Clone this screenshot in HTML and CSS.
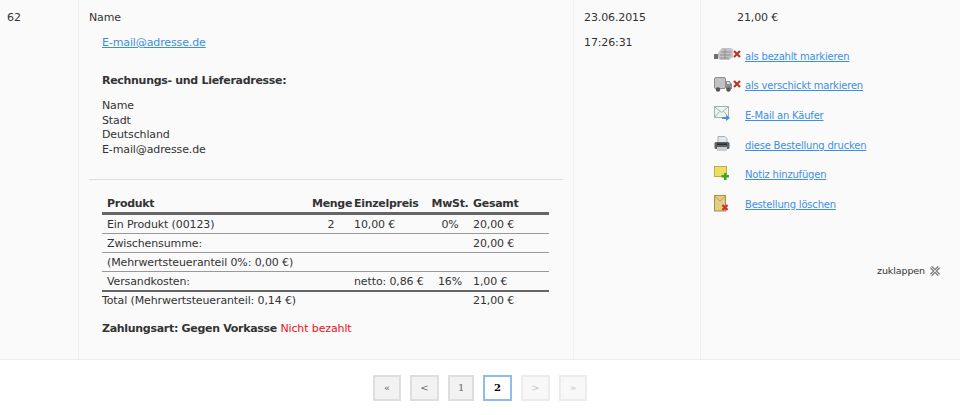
FILE: index.html

```html
<!DOCTYPE html>
<html lang="de">
<head>
  <meta charset="UTF-8" />
  <title>Bestellungen</title>
  <meta name="viewport" content="width=device-width, initial-scale=1" />
  <link rel="stylesheet" href="styles.css">
</head>
<body>

<div class="order">
  <div class="col col-id">62</div>

  <div class="col col-customer">
    <div class="cust-name">Name</div>
    <div class="cust-mail"><a href="#">E-mail@adresse.de</a></div>
    <h4 class="addr-title">Rechnungs- und Lieferadresse:</h4>
    <div class="addr">Name<br>Stadt<br>Deutschland<br>E-mail@adresse.de</div>
    <hr class="divider">

    <table class="items">
      <colgroup>
        <col class="c-prod"><col class="c-qty"><col class="c-price"><col class="c-tax"><col class="c-sum">
      </colgroup>
      <thead>
        <tr><th>Produkt</th><th class="mid">Menge</th><th>Einzelpreis</th><th class="mid">MwSt.</th><th>Gesamt</th></tr>
      </thead>
      <tbody>
        <tr><td>Ein Produkt (00123)</td><td class="mid">2</td><td>10,00 €</td><td class="mid">0%</td><td>20,00 €</td></tr>
        <tr><td>Zwischensumme:</td><td></td><td></td><td></td><td>20,00 €</td></tr>
        <tr><td colspan="4">(Mehrwertsteueranteil 0%: 0,00 €)</td><td></td></tr>
        <tr class="last"><td>Versandkosten:</td><td></td><td>netto: 0,86 €</td><td class="mid">16%</td><td>1,00 €</td></tr>
        <tr class="total"><td colspan="4">Total (Mehrwertsteueranteil: 0,14 €)</td><td>21,00 €</td></tr>
      </tbody>
    </table>

    <p class="payment"><strong>Zahlungsart: Gegen Vorkasse</strong> <span class="unpaid">Nicht bezahlt</span></p>
  </div>

  <div class="col col-date">
    <div>23.06.2015</div>
    <div class="time">17:26:31</div>
  </div>

  <div class="col col-actions">
    <div class="amount">21,00 €</div>
    <ul class="actions">
      <li>
        <span class="icons">
          <svg width="20" height="15" viewBox="0 0 20 15"><rect x="0" y="7" width="4" height="5" fill="#6f6f6f"/><path d="M4 6l4-5h8l3 1v8l-4 3H6l-2-2z" fill="#c4c4c4"/><path d="M7 5h10M6 8h11M6 11h9M11 2v10" stroke="#8f8f8f" fill="none"/></svg>
          <svg class="cross" width="8" height="8" viewBox="0 0 8 8"><path d="M1 1l6 6M7 1l-6 6" stroke="#b8362c" stroke-width="2.200"/></svg>
        </span>
        <a href="#">als bezahlt markieren</a>
      </li>
      <li>
        <span class="icons">
          <svg width="20" height="15" viewBox="0 0 20 15"><rect x="0.500" y="0.500" width="11" height="11" rx="1.500" fill="#c2c2c2" stroke="#8d8d8d"/><path d="M12 4h3.500l2.500 3v5h-6z" fill="#8f8f8f"/><path d="M13 5h2l1.500 2H13z" fill="#e2e2e2"/><circle cx="4" cy="12.500" r="2.200" fill="#555"/><circle cx="14.500" cy="12.500" r="2.200" fill="#555"/></svg>
          <svg class="cross" width="8" height="8" viewBox="0 0 8 8"><path d="M1 1l6 6M7 1l-6 6" stroke="#b8362c" stroke-width="2.200"/></svg>
        </span>
        <a href="#">als verschickt markieren</a>
      </li>
      <li>
        <span class="icons">
          <svg width="16" height="15" viewBox="0 0 16 15"><rect x="0.500" y="0.500" width="14" height="11" fill="#eef3f3" stroke="#a5b0ad"/><path d="M1 1l6.500 5.500L14 1M1 11l4.500-5.500M14 11l-4-5.500" stroke="#a5b0ad" fill="none"/><path d="M8 11h4V9l4 3-4 3v-2H8z" fill="#4a90d9"/></svg>
        </span>
        <a href="#">E-Mail an Käufer</a>
      </li>
      <li>
        <span class="icons">
          <svg width="16" height="16" viewBox="0 0 16 16"><path d="M4 0.500h7l2 2V7H4z" fill="#e4e8ea" stroke="#a9b0b4"/><rect x="0.500" y="6" width="15" height="7" rx="1.500" fill="#5c6064"/><rect x="3" y="7.500" width="10" height="1.500" fill="#2c2e30"/><rect x="3" y="11" width="10" height="4" fill="#c9cdd0"/></svg>
        </span>
        <a href="#">diese Bestellung drucken</a>
      </li>
      <li>
        <span class="icons">
          <svg width="16" height="14" viewBox="0 0 16 14"><rect x="0.500" y="0.500" width="12" height="10" fill="#ecdf63" stroke="#bfae3a"/><path d="M10 7h2.500v2H15v2.500h-2.500V14H10v-2.500H7.500V9H10z" fill="#3fa52a"/></svg>
        </span>
        <a href="#">Notiz hinzufügen</a>
      </li>
      <li>
        <span class="icons">
          <svg width="16" height="17" viewBox="0 0 16 17"><rect x="0.500" y="0.500" width="11" height="15.500" fill="#e5cd86" stroke="#ab8f45"/><path d="M0.500 1l5.500 5 5.500-5" fill="none" stroke="#ba9f55"/><path d="M8.500 10l5 5M13.500 10l-5 5" stroke="#c8372e" stroke-width="2.400"/></svg>
        </span>
        <a href="#">Bestellung löschen</a>
      </li>
    </ul>
    <div class="collapse">zuklappen
      <svg width="12" height="12" viewBox="0 0 12 12"><path d="M2 2l8 8M10 2l-8 8" stroke="#8b8b8b" stroke-width="3.400"/><path d="M2 2l8 8M10 2l-8 8" stroke="#d8d8d8" stroke-width="1"/></svg>
    </div>
  </div>
</div>

<div class="pager">
  <a href="#">«</a>
  <a href="#" class="wide">&lt;</a>
  <a href="#" class="num">1</a>
  <a href="#" class="wide current">2</a>
  <a href="#" class="wide off">&gt;</a>
  <a href="#" class="off">»</a>
</div>

</body>
</html>
```

FILE: styles.css

```css
body {
  margin: 0;
  font-family: "DejaVu Sans", Verdana, sans-serif;
  font-size: 11px;
  line-height: 14px;
  letter-spacing: -0.12px;
  color: #333;
  background: #fff;
}
a {
  color: #3d8fe6;
}
strong,
th,
h4 {
  letter-spacing: -0.3px;
}
.order {
  display: grid;
  grid-template-columns: 79px 495px 127px 1fr;
  height: 360px;
  background: #fafafa;
  border-bottom: 1px solid #ececec;
  box-sizing: border-box;
}
.col {
  border-right: 1px solid #f0f0f0;
  padding-top: 11px;
}
.col-id {
  padding-left: 7px;
}
.col-customer {
  padding-left: 10px;
  padding-right: 10px;
}
.cust-mail {
  margin: 11px 0 0 13px;
}
.addr-title {
  margin: 24px 0 0 13px;
  font-size: 11px;
  line-height: 14px;
}
.addr {
  margin: 11px 0 0 13px;
  line-height: 14.500px;
}
.divider {
  margin: 22px 0 0;
  border: 0;
  border-top: 1px solid #ddd;
}
.items {
  margin: 13px 0 0 13px;
  width: 447px;
  table-layout: fixed;
  border-collapse: collapse;
}
.c-prod { width: 208px; }
.c-qty { width: 42px; }
.c-price { width: 77px; }
.c-tax { width: 42px; }
.items th {
  text-align: left;
  padding: 2px 2px 0;
  height: 17px;
  font-size: 11px;
  white-space: nowrap;
  border-bottom: 3px solid #666;
}
.items th:first-child,
.items td:first-child {
  padding-left: 5px;
}
.items td {
  padding: 1px 2px 0;
  height: 17px;
  border-bottom: 1px solid #999;
  white-space: nowrap;
}
.items .mid {
  text-align: center;
}
.items .last td {
  border-bottom: 2px solid #666;
}
.items .total td {
  border-bottom: 0;
  padding-top: 0;
  height: 17px;
}
.items .total td:first-child {
  padding-left: 0;
}
.payment {
  margin: 13px 0 0 13px;
}
.unpaid {
  color: #f01020;
}
.col-date {
  padding-left: 10px;
}
.time {
  margin-top: 11px;
}
.col-actions {
  padding-left: 36px;
  border-right: 0;
}
.actions {
  list-style: none;
  margin: 17px 0 0 -23px;
  padding: 0;
  font-size: 10px;
  letter-spacing: -0.2px;
}
.actions li {
  display: flex;
  align-items: center;
  height: 29.600px;
}
.icons {
  display: flex;
  align-items: flex-start;
  width: 31px;
  height: 16px;
  flex: none;
  margin-top: -3px;
}
.cross {
  margin: 3px 0 0 -1px;
}
.collapse {
  margin: 44px 19px 0 0;
  display: flex;
  justify-content: flex-end;
  align-items: center;
  gap: 4px;
  font-size: 9.500px;
  letter-spacing: -0.1px;
}
.pager {
  display: flex;
  justify-content: center;
  gap: 9px;
  margin-top: 15px;
}
.pager a {
  width: 28px;
  height: 26px;
  box-sizing: border-box;
  display: flex;
  align-items: center;
  justify-content: center;
  background: #f2f2f2;
  border: 2px solid #dedede;
  color: #666;
  font-size: 10px;
  font-family: "DejaVu Serif", serif;
  text-decoration: none;
}
.pager .wide {
  width: 29px;
}
.pager .num {
  width: 26px;
}
.pager .current {
  background: #fff;
  border-color: #8cbcf0;
  color: #000;
  font-weight: bold;
}
.pager .off {
  background: #f8f8f8;
  border-color: #ececec;
  color: #c4c4c4;
}
```
